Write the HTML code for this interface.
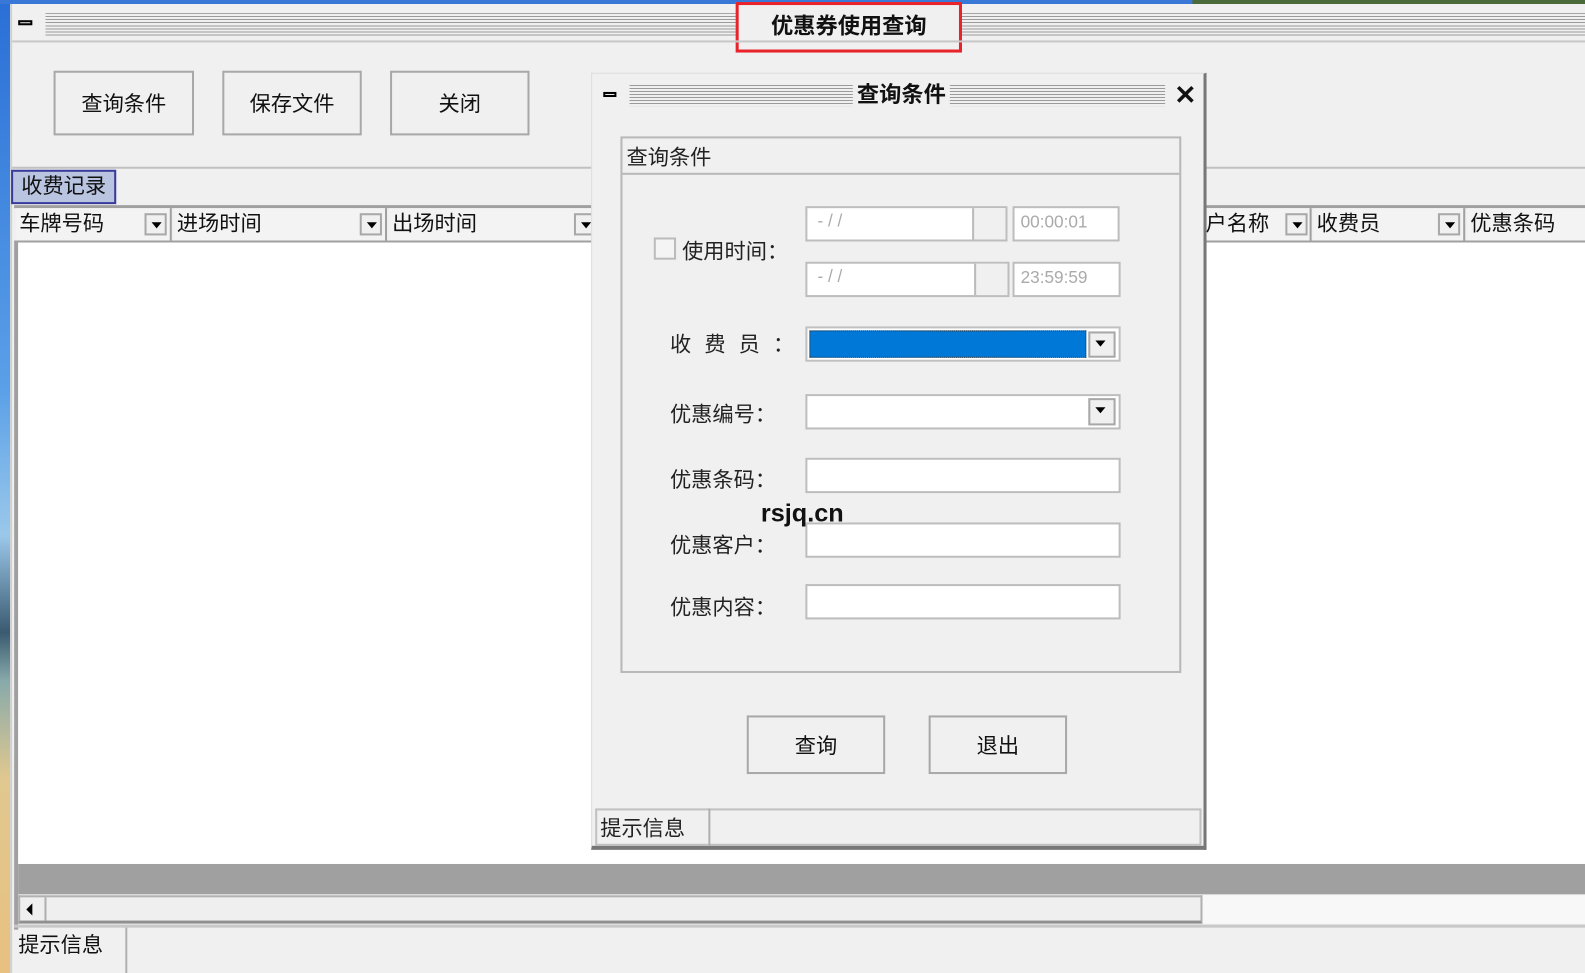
<!DOCTYPE html>
<html><head><meta charset="utf-8"><style>
*{margin:0;padding:0;box-sizing:border-box}
body{width:1585px;height:963px;overflow:hidden;background:#f0f0f0;font-family:"Liberation Sans","Noto Sans CJK SC",sans-serif;color:#111;position:relative}
#w{position:absolute;left:0;top:0;width:1570px;height:953px;transform:scale(1.0105);transform-origin:0 0}
.a{position:absolute}
.stripes{background:repeating-linear-gradient(to bottom,#9a9a9a 0 1px,#f0f0f0 1px 3px)}
.btn{position:absolute;border:2px solid #a8a8a8;background:#f0f0f0;display:flex;align-items:center;justify-content:center;font-size:21px}
.hdr{position:absolute;top:206px;height:32px;font-size:21px;line-height:32px;padding-left:3px;border-right:2px solid #a0a0a0;background:#f3f3f3}
.dd{position:absolute;width:22px;height:22px;border:2px solid #a8a8a8;background:#f0f0f0}
.dd:after{content:"";position:absolute;left:5px;top:7px;border-left:5px solid transparent;border-right:5px solid transparent;border-top:6px solid #000}
.inp{position:absolute;background:#fff;border:2px solid #bdbdbd}
.lbl{position:absolute;font-size:21px;color:#222}
.gray{color:#aaa;font-size:17px}
</style></head><body><div id="w">
<div class="a" style="left:0;top:0;width:10px;height:963px;background:linear-gradient(#2a6fd6 0,#5aa0e8 40%,#9bc8ea 55%,#3a5a70 65%,#8aa 70%,#e0c890 80%,#e8c080 100%)"></div>
<div class="a" style="left:0;top:0;width:1585px;height:4px;background:#3a78d8"></div>
<div class="a" style="left:1180px;top:0;width:405px;height:4px;background:#4a6a3a"></div>
<div class="a" style="left:10px;top:4px;width:1575px;height:959px;background:#f0f0f0;border-left:2px solid #d0d0d0"></div>
<div class="a" style="left:18px;top:20px;width:14px;height:5px;border:2px solid #000"></div>
<div class="a stripes" style="left:45px;top:13px;width:1540px;height:23px"></div>
<div class="a" style="left:728px;top:2px;width:224px;height:50px;background:#f0f0f0;border:3px solid #e8242a;font-weight:bold;font-size:22px;display:flex;align-items:center;justify-content:center;padding-bottom:6px">优惠券使用查询</div>
<div class="a" style="left:12px;top:40px;width:1573px;height:2px;background:#c8c8c8"></div>
<div class="btn" style="left:53px;top:70px;width:139px;height:64px">查询条件</div>
<div class="btn" style="left:220px;top:70px;width:138px;height:64px">保存文件</div>
<div class="btn" style="left:386px;top:70px;width:138px;height:64px">关闭</div>
<div class="a" style="left:12px;top:165px;width:1573px;height:2px;background:#c0c0c0"></div>
<div class="a" style="left:11px;top:168px;width:104px;height:34px;background:#b8c4e0;border:2px solid #3a3a9a;font-size:21px;line-height:30px;padding-left:8px">收费记录</div>
<div class="a" style="left:14px;top:203px;width:1571px;height:3px;background:#a0a0a0"></div>
<div class="hdr" style="left:16px;width:154px">车牌号码</div><div class="dd" style="left:143px;top:211px"></div>
<div class="hdr" style="left:172px;width:211px">进场时间</div><div class="dd" style="left:356px;top:211px"></div>
<div class="hdr" style="left:385px;width:210px">出场时间</div><div class="dd" style="left:568px;top:211px"></div>
<div class="hdr" style="left:1190px;width:108px">户名称</div><div class="dd" style="left:1272px;top:211px"></div>
<div class="hdr" style="left:1300px;width:150px">收费员</div><div class="dd" style="left:1423px;top:211px"></div>
<div class="hdr" style="left:1452px;width:133px">优惠条码</div>
<div class="a" style="left:14px;top:238px;width:1571px;height:2px;background:#a0a0a0"></div>
<div class="a" style="left:14px;top:240px;width:4px;height:680px;background:#a0a0a0"></div>
<div class="a" style="left:18px;top:240px;width:1567px;height:615px;background:#fff"></div>
<div class="a" style="left:18px;top:855px;width:1567px;height:30px;background:#a0a0a0"></div>
<div class="a" style="left:18px;top:886px;width:1567px;height:28px;background:#f8f8f8"></div>
<div class="a" style="left:18px;top:886px;width:1172px;height:28px;background:#efefef;border:2px solid #b0b0b0;border-bottom:3px solid #909090"></div>
<div class="a" style="left:20px;top:888px;width:26px;height:23px;border-right:2px solid #b0b0b0"></div>
<div class="a" style="left:26px;top:894px;border-top:6px solid transparent;border-bottom:6px solid transparent;border-right:6px solid #000"></div>
<div class="a" style="left:14px;top:915px;width:1571px;height:3px;background:#c8c8c8"></div>
<div class="a" style="left:18px;top:918px;width:108px;height:45px;border-right:2px solid #b0b0b0;font-size:21px;line-height:36px">提示信息</div>
<div class="a" style="left:585px;top:72px;width:609px;height:769px;background:#f0f0f0;border:1px solid #ddd;border-right:3px solid #777;border-bottom:4px solid #777"></div>
<div class="a" style="left:597px;top:91px;width:13px;height:5px;border:2px solid #000"></div>
<div class="a stripes" style="left:623px;top:84px;width:530px;height:21px"></div>
<div class="a" style="left:844px;top:78px;width:96px;height:32px;background:#f0f0f0;font-weight:bold;font-size:22px;line-height:32px;text-align:center">查询条件</div>
<div class="a" style="left:1162px;top:78px;font-size:26px;font-weight:bold;line-height:32px">✕</div>
<div class="a" style="left:614px;top:135px;width:555px;height:531px;border:2px solid #b8b8b8"></div>
<div class="a" style="left:616px;top:171px;width:551px;height:2px;background:#b8b8b8"></div>
<div class="lbl" style="left:620px;top:140px">查询条件</div>
<div class="a" style="left:647px;top:235px;width:22px;height:22px;border:2px solid #bbb;background:#f4f4f4"></div>
<div class="lbl" style="left:675px;top:233px">使用时间：</div>
<div class="inp" style="left:797px;top:204px;width:200px;height:35px;padding:3px 10px" ><span class="gray">- / /</span></div>
<div class="a" style="left:962px;top:206px;width:33px;height:31px;background:#f0f0f0;border-left:2px solid #bbb"></div>
<div class="inp" style="left:1002px;top:204px;width:106px;height:35px;padding:4px 6px"><span class="gray">00:00:01</span></div>
<div class="inp" style="left:797px;top:259px;width:202px;height:35px;padding:3px 10px"><span class="gray">- / /</span></div>
<div class="a" style="left:964px;top:261px;width:33px;height:31px;background:#f0f0f0;border-left:2px solid #bbb"></div>
<div class="inp" style="left:1002px;top:259px;width:107px;height:35px;padding:4px 6px"><span class="gray">23:59:59</span></div>
<div class="lbl" style="left:663px;top:325px;letter-spacing:13px">收费员：</div>
<div class="inp" style="left:797px;top:323px;width:312px;height:35px;border-color:#c0c0c0"></div>
<div class="a" style="left:801px;top:327px;width:274px;height:27px;background:#0078d7;border:1px dotted #333"></div>
<div class="dd" style="left:1077px;top:328px;width:27px;height:26px"></div>
<div class="lbl" style="left:663px;top:394px">优惠编号：</div>
<div class="inp" style="left:797px;top:390px;width:312px;height:35px"></div>
<div class="dd" style="left:1077px;top:394px;width:27px;height:27px"></div>
<div class="lbl" style="left:663px;top:459px">优惠条码：</div>
<div class="inp" style="left:797px;top:453px;width:312px;height:35px"></div>
<div class="lbl" style="left:663px;top:524px">优惠客户：</div>
<div class="inp" style="left:797px;top:517px;width:312px;height:35px"></div>
<div class="lbl" style="left:663px;top:585px">优惠内容：</div>
<div class="inp" style="left:797px;top:578px;width:312px;height:35px"></div>
<div class="a" style="left:753px;top:494px;font-size:25px;font-weight:bold;color:#111">rsjq.cn</div>
<div class="btn" style="left:739px;top:708px;width:137px;height:58px">查询</div>
<div class="btn" style="left:919px;top:708px;width:137px;height:58px">退出</div>
<div class="a" style="left:589px;top:800px;width:600px;height:37px;border:2px solid #c0c0c0"></div>
<div class="a" style="left:701px;top:800px;width:2px;height:37px;background:#b0b0b0"></div>
<div class="lbl" style="left:594px;top:804px">提示信息</div>
</div></body></html>
